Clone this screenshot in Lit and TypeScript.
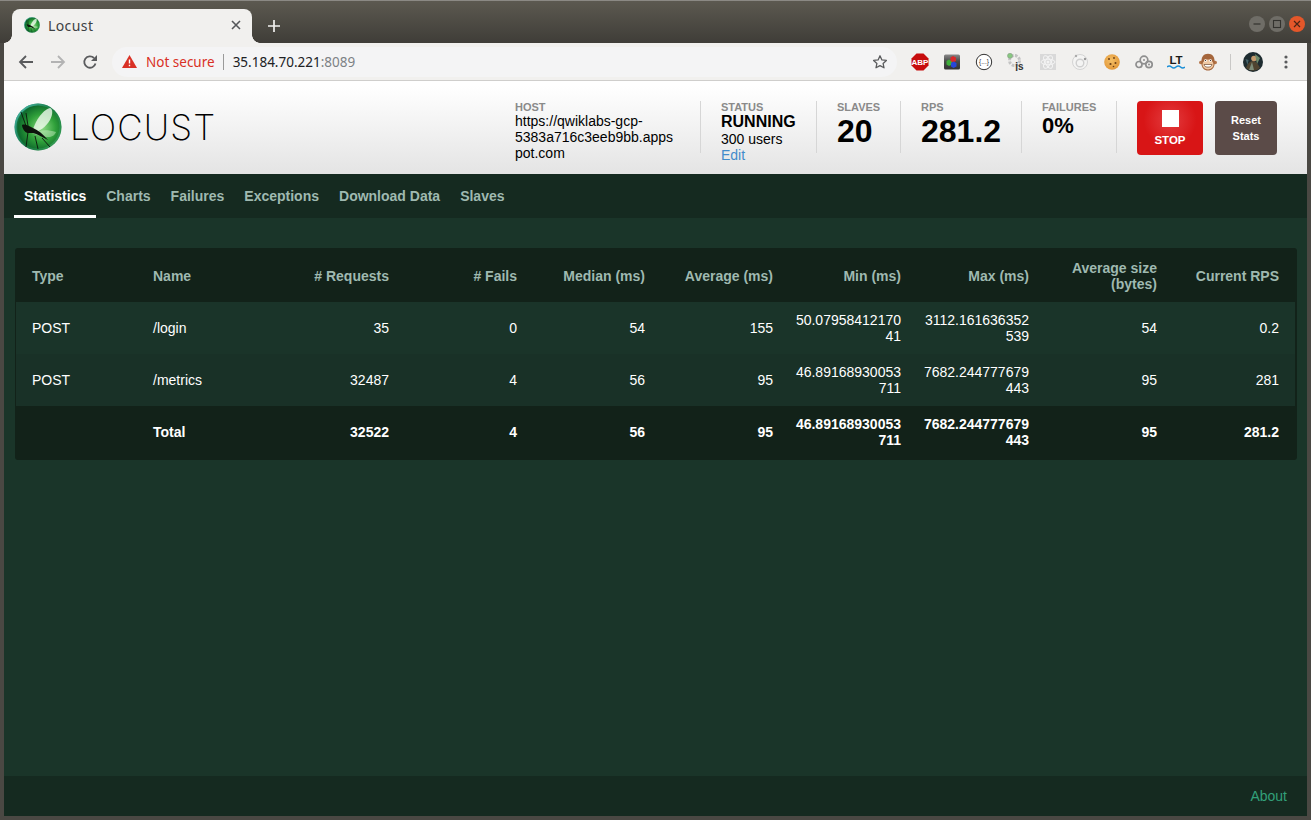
import { LitElement, html, css, svg } from "lit";
import { customElement } from "lit/decorators.js";

const tabs = ["Statistics", "Charts", "Failures", "Exceptions", "Download Data", "Slaves"];
const headers = ["Type", "Name", "# Requests", "# Fails", "Median (ms)", "Average (ms)", "Min (ms)", "Max (ms)", "Average size (bytes)", "Current RPS"];
const rows = [
  ["POST", "/login", "35", "0", "54", "155", "50.0795841217041", "3112.161636352539", "54", "0.2"],
  ["POST", "/metrics", "32487", "4", "56", "95", "46.89168930053711", "7682.244777679443", "95", "281"],
];
const total = ["", "Total", "32522", "4", "56", "95", "46.89168930053711", "7682.244777679443", "95", "281.2"];

const abp = svg`<svg class="ext" viewBox="0 0 18 18"><polygon points="5.500,.5 12.500,.5 17.500,5.500 17.500,12.500 12.500,17.500 5.500,17.500 .5,12.500 .5,5.500" fill="#c70d0d"/><text x="9" y="12" text-anchor="middle" class="abp">ABP</text></svg>`;
const cube = svg`<svg class="ext" viewBox="0 0 18 18"><defs><linearGradient id="cb" x1="0" y1="0" x2="0" y2="1"><stop offset="0" stop-color="#8a8a8a"/><stop offset=".45" stop-color="#4a4a4a"/><stop offset="1" stop-color="#333"/></linearGradient></defs><rect x="1" y="1.500" width="16" height="15" rx="1.500" fill="url(#cb)"/><polygon points="6,6.500 9,8 9,11.500 6,13 3.500,11.500 3.500,8" fill="#3fae3a"/><polygon points="10,3 13,4.500 13,8 10,9.500 7.500,8 7.500,4.500" fill="#d92a2a"/><polygon points="10.500,8.500 13.500,10 13.500,13.500 10.500,15 8,13.500 8,10" fill="#2747d8"/></svg>`;
const braces = svg`<svg class="ext" viewBox="0 0 18 18"><circle cx="9" cy="9" r="7.700" fill="#fff" stroke="#333" stroke-width="1"/><text x="9" y="11.300" text-anchor="middle" class="brace">{...}</text></svg>`;
const jsGear = svg`<svg class="ext" viewBox="0 0 18 18"><circle cx="7.500" cy="7.500" r="5" fill="none" stroke="#c4c4c4" stroke-width="3" stroke-dasharray="2.600 1.300"/><circle cx="3" cy="2.800" r="2.500" fill="#86c97f" stroke="#8a9a88" stroke-width=".6"/><text x="12.500" y="16.500" text-anchor="middle" class="js">js</text></svg>`;
const atom = svg`<svg class="ext" viewBox="0 0 18 18"><rect x="1" y="1" width="16" height="16" fill="#d9d9d9"/><g fill="none" stroke="#f4f4f4" stroke-width="1"><ellipse cx="9" cy="9" rx="7" ry="2.800"/><ellipse cx="9" cy="9" rx="7" ry="2.800" transform="rotate(60 9 9)"/><ellipse cx="9" cy="9" rx="7" ry="2.800" transform="rotate(120 9 9)"/></g><circle cx="9" cy="9" r="1.500" fill="#f4f4f4"/></svg>`;
const ring = svg`<svg class="ext" viewBox="0 0 18 18"><circle cx="9" cy="9" r="7.500" fill="#f4f4f3" stroke="#d4d4d4"/><circle cx="9" cy="10" r="3.800" fill="none" stroke="#cfcfcf" stroke-width="1.400"/><circle cx="5" cy="3" r="1.200" fill="#aaa"/><circle cx="14" cy="6" r="1.200" fill="#999"/></svg>`;
const cookie = svg`<svg class="ext" viewBox="0 0 18 18"><defs><radialGradient id="ck" cx="45%" cy="40%" r="60%"><stop offset="0" stop-color="#f4bf66"/><stop offset="1" stop-color="#e2983a"/></radialGradient></defs><circle cx="9" cy="9" r="7.800" fill="url(#ck)"/><g fill="#6b3f17"><circle cx="6" cy="6" r="1"/><circle cx="11" cy="5" r=".9"/><circle cx="12.500" cy="10" r="1"/><circle cx="7.500" cy="11" r="1.100"/><circle cx="10.500" cy="13.500" r=".8"/></g></svg>`;
const chain = svg`<svg class="ext" viewBox="0 0 18 18"><g fill="none" stroke="#8f8f8f" stroke-width="1.700"><circle cx="4" cy="11.500" r="3"/><circle cx="9" cy="7" r="3.800"/><circle cx="14" cy="11.500" r="3.200"/></g><circle cx="9" cy="7" r="1" fill="#8f8f8f"/><circle cx="14" cy="11.500" r="1" fill="#8f8f8f"/></svg>`;
const lt = svg`<svg class="ext" viewBox="0 0 18 18"><text x="9" y="10.500" text-anchor="middle" class="lt">LT</text><path d="M0 14q2.250-2 4.500 0t4.500 0 4.500 0 4.500 0" fill="none" stroke="#1c8fd6" stroke-width="1.500"/></svg>`;
const monkey = svg`<svg class="ext" viewBox="0 0 18 18"><circle cx="1.800" cy="9.500" r="1.800" fill="#b5764a"/><circle cx="16.200" cy="9.500" r="1.800" fill="#b5764a"/><path d="M9 .8C4.500.8 2.300 4 2.300 9.500s3 8 6.700 8 6.700-2.500 6.700-8S13.500.8 9 .8z" fill="#a5663c"/><ellipse cx="9" cy="11.500" rx="5.500" ry="5" fill="#efc9a4"/><circle cx="6.500" cy="7.500" r="1.300" fill="#fff"/><circle cx="11.500" cy="7.500" r="1.300" fill="#fff"/><circle cx="6.500" cy="7.500" r=".6" fill="#222"/><circle cx="11.500" cy="7.500" r=".6" fill="#222"/><path d="M5 11.500h8c-.5 3.500-7.500 3.500-8 0z" fill="#fff" stroke="#5a3418" stroke-width=".6"/></svg>`;

@customElement("app-root")
export class AppRoot extends LitElement {
  static styles = css`
    :host { display: block; }
    * { box-sizing: border-box; }
    .window {
      width: 1311px; height: 820px; display: flex; flex-direction: column; overflow: hidden;
      background: #4a4843; padding: 0 4px 4px;
      font-family: "Liberation Sans", Arial, sans-serif;
    }
    .titlebar {
      height: 43px; margin: 0 -4px; flex: none; display: flex; align-items: flex-end; padding-left: 12px;
      background: linear-gradient(#5c5950, #3f3d38); border-top: 1px solid #8b8984;
    }
    .tab {
      position: relative;
      width: 240px; height: 34px; background: #f1f0ee; border-radius: 8px 8px 0 0; display: flex; align-items: center;
      padding: 0 11px 2px 12px; gap: 8px; color: #3c4043; font: 14px "Noto Sans", sans-serif;
    }
    .tab::before, .tab::after { content: ""; position: absolute; bottom: 0; width: 8px; height: 8px; }
    .tab::before { left: -8px; background: radial-gradient(circle at 0 0, transparent 7.500px, #f1f0ee 8px); }
    .tab::after { right: -8px; background: radial-gradient(circle at 100% 0, transparent 7.500px, #f1f0ee 8px); }
    .tab .title { flex: 1; letter-spacing: .4px; }
    .tab-close, .newtab { display: block; }
    .newtab { margin: 0 0 11px 16px; }
    .win-btns { margin: 0 6px 0 auto; display: flex; gap: 4px; align-self: center; padding-top: 3px; }
    .win-btn { width: 16px; height: 16px; display: block; }
    .toolbar {
      height: 38px; flex: none; background: #f1f0ee; border-bottom: 1px solid #cfcecc; display: flex; align-items: center;
      font: 14px "Noto Sans", sans-serif; margin-right: 0;
    }
    .nav { display: block; flex: none; }
    .back { margin-left: 14px; }
    .fwd { margin-left: 16px; }
    .reload { margin-left: 16px; }
    .omni {
      width: 785px; height: 30px; margin-left: 14px; border-radius: 15px; background: #f4f4f5; display: flex; align-items: center;
      padding: 0 9px 0 10px; flex: none;
    }
    .warn { display: block; flex: none; }
    .insecure { color: #d93025; margin-left: 9px; font-size: 13.500px; }
    .sep { width: 1px; height: 16px; background: #9a9a9a; margin: 0 9px 0 8px; flex: none; }
    .host-url { color: #202124; font-size: 13.500px; }
    .port { color: #7d8285; }
    .star { margin-left: auto; display: block; }
    .exts { display: flex; margin-left: 14px; align-items: center; gap: 14px; }
    .ext { width: 18px; height: 18px; display: block; flex: none; }
    .abp { font: bold 8px "Liberation Sans", sans-serif; fill: #fff; }
    .brace { font: 6.500px "Liberation Sans", sans-serif; fill: #333; }
    .js { font: bold 10px "Liberation Sans", sans-serif; fill: #333; }
    .lt { font: bold 11.500px "Liberation Sans", sans-serif; fill: #1b1b1b; }
    .tool-sep { width: 1px; height: 16px; background: #c9c8c6; margin: 0 -2px 0 -1px; flex: none; }
    .avatar { width: 20px; height: 20px; display: block; flex: none; }
    .menu { display: block; margin-left: 7px; flex: none; }
    .page { flex: 1; display: flex; flex-direction: column; background: #1a3529; min-height: 0; }
    .header {
      height: 93px; flex: none; display: flex; align-items: flex-start; padding: 20px 30px 0 10px;
      background: linear-gradient(#fff 5%, #e4e4e4);
    }
    .logo { display: flex; align-items: center; gap: 8px; width: 501px; margin-top: 2px; flex: none; }
    .globe { width: 48px; height: 48px; display: block; flex: none; }
    .wordmark { font: 200 35px Inter, Lato, sans-serif; color: #000; letter-spacing: 1.1px; line-height: 48px; }
    .stat { height: 52px; border-right: 1px solid #d6d6d6; padding-left: 20px; flex: none; }
    .stat.host { padding-left: 0; width: 186px; }
    .stat.status { width: 116px; }
    .stat.slaves { width: 84px; }
    .stat.rps { width: 121px; }
    .stat.fails { width: 95px; }
    .label { font-size: 11px; font-weight: bold; color: #8a8a8a; line-height: 12px; display: block; }
    .hosturl { width: 160px; font-size: 14px; line-height: 16px; color: #000; overflow-wrap: anywhere; }
    .running { font-size: 16px; font-weight: bold; line-height: 16px; color: #000; display: block; margin-top: 1px; }
    .users { font-size: 14px; line-height: 16px; color: #000; display: block; margin-top: 1px; }
    .edit { font-size: 14px; line-height: 16px; color: #428bca; display: block; }
    .big { font-size: 32px; font-weight: bold; line-height: 32px; color: #000; display: block; margin-top: 2px; }
    .mid { font-size: 22px; font-weight: bold; line-height: 24px; color: #000; display: block; margin-top: 1px; }
    .btn {
      height: 54px; border-radius: 4px; flex: none; color: #fff; font-weight: bold; font-size: 11px; text-align: center;
      display: flex; flex-direction: column; align-items: center; justify-content: center;
    }
    .stop { width: 66px; margin-left: 20px; background: radial-gradient(circle at 50% 35%, #e33c3f 0, #d81516 55%); }
    .square { width: 17px; height: 17px; background: #fff; display: block; margin-bottom: 7px; }
    .stop .t { line-height: 13px; font-size: 11.500px; }
    .reset { width: 62px; margin-left: 12px; background: #5b4b48; line-height: 16px; }
    .tabs { height: 44px; flex: none; background: #152a20; display: flex; padding-left: 10px; }
    .tabitem {
      padding: 14px 10px 0; font-size: 14px; font-weight: bold; color: #9fb9b0; line-height: 16px; border-bottom: 3px solid transparent;
    }
    .tabitem.active { color: #fff; border-bottom-color: #fff; }
    .main { flex: 1; padding: 30px 10px 0 11px; min-height: 0; }
    .table { background: #122219; border-radius: 3px; padding: 0 2px 0 1px; font-size: 14px; color: #fff; }
    .row {
      display: grid; grid-template-columns: 121px 140px 128px 128px 128px 128px 128px 128px 128px 122px; align-items: center; height: 52px;
      line-height: 16px;
    }
    .row.head { height: 54px; font-weight: bold; color: #9fb9b0; padding-top: 2px; }
    .row.tot { height: 54px; font-weight: bold; padding-bottom: 2px; }
    .row.odd { background: #1a3429; }
    .row.even { background: #193127; }
    .cell { padding: 0 16px 0 6px; text-align: right; overflow-wrap: anywhere; }
    .cell.left { text-align: left; padding: 0 16px; }
    .footer {
      height: 40px; flex: none; background: #152a20; color: #32a07a; font-size: 14px; text-align: right; padding: 12px 20px 0 0; line-height: 16px;
    }
  `;

  private cells(r: string[]) {
    return r.map((c, i) => html`<div class="cell ${i < 2 ? "left" : ""}">${c}</div>`);
  }

  render() {
    return html`<div class="window">
      <div class="titlebar">
        <div class="tab">
          <svg class="ext" style="width:16px;height:16px" viewBox="0 0 48 48"><use href="#globe-art"></use></svg>
          <span class="title">Locust</span>
          <svg class="tab-close" width="10" height="10" viewBox="0 0 10 10"><path d="M1 1l8 8M9 1l-8 8" stroke="#55575a" stroke-width="1.600"/></svg>
        </div>
        <svg class="newtab" width="12" height="12" viewBox="0 0 12 12"><path d="M6 0v12M0 6h12" stroke="#f2f1ef" stroke-width="1.700"/></svg>
        <div class="win-btns">
          <svg class="win-btn" viewBox="0 0 16 16"><circle cx="8" cy="8" r="8" fill="#6f6d67"/><path d="M4.500 8h7" stroke="#33322e" stroke-width="1.200"/></svg>
          <svg class="win-btn" viewBox="0 0 16 16"><circle cx="8" cy="8" r="8" fill="#6f6d67"/><rect x="4.500" y="4.500" width="7" height="7" fill="none" stroke="#33322e" stroke-width="1.100"/></svg>
          <svg class="win-btn" viewBox="0 0 16 16"><circle cx="8" cy="8" r="8" fill="#e4572a"/><path d="M5 5l6 6M11 5l-6 6" stroke="#4a2515" stroke-width="1.200"/></svg>
        </div>
      </div>
      <div class="toolbar">
        <svg class="nav back" width="16" height="16" viewBox="0 0 16 16"><path d="M15 8H2M8 2L2 8l6 6" fill="none" stroke="#5a5b5d" stroke-width="1.800"/></svg>
        <svg class="nav fwd" width="16" height="16" viewBox="0 0 16 16"><path d="M1 8h13M8 2l6 6-6 6" fill="none" stroke="#b3b3b3" stroke-width="1.800"/></svg>
        <svg class="nav reload" width="16" height="16" viewBox="0 0 16 16"><path d="M13.500 9.500A5.700 5.700 0 1 1 12 4" fill="none" stroke="#5a5b5d" stroke-width="1.800"/><path d="M15 1v6H9z" fill="#5a5b5d"/></svg>
        <div class="omni">
          <svg class="warn" width="15" height="13" viewBox="0 0 15 13"><path d="M7.500 0L15 13H0z" fill="#d93025"/><path d="M7.500 4.500v4M7.500 9.700v1.500" stroke="#fff" stroke-width="1.400"/></svg>
          <span class="insecure">Not secure</span>
          <span class="sep"></span>
          <span class="host-url">35.184.70.221<span class="port">:8089</span></span>
          <svg class="star" width="16" height="16" viewBox="0 0 16 16"><path d="M8 1.800l1.900 4.100 4.500.5-3.300 3 .9 4.400L8 11.600l-4 2.200.9-4.400-3.300-3 4.500-.5z" fill="none" stroke="#5a5b5d" stroke-width="1.300" stroke-linejoin="round"/></svg>
        </div>
        <div class="exts">
          ${abp}${cube}${braces}${jsGear}${atom}${ring}${cookie}${chain}${lt}${monkey}
          <span class="tool-sep"></span>
          <svg class="avatar" viewBox="0 0 20 20"><circle cx="10" cy="10" r="10" fill="#1e2c30"/><path d="M3 16c2-5 4-7 7-7s5 3 7 7a10 10 0 0 1-14 0z" fill="#4f4430"/><path d="M6 18l3-8 2 8z" fill="#7d8c78"/><circle cx="11" cy="6.500" r="2.800" fill="#c49a6c"/><path d="M12 2l5 4-3 6z" fill="#6e8a6a"/><path d="M2.500 7l3 1-1 5z" fill="#46646a"/></svg>
          <svg class="menu" width="4" height="14" viewBox="0 0 4 14"><g fill="#5a5b5d"><circle cx="2" cy="2" r="1.600"/><circle cx="2" cy="7" r="1.600"/><circle cx="2" cy="12" r="1.600"/></g></svg>
        </div>
      </div>
      <div class="page">
        <div class="header">
          <div class="logo">
            <svg class="globe" viewBox="0 0 48 48">
              <defs>
                <radialGradient id="gl" cx="58%" cy="52%" r="58%"><stop offset="0" stop-color="#8fdc86"/><stop offset=".5" stop-color="#2fa03a"/><stop offset=".85" stop-color="#0f6b2c"/><stop offset="1" stop-color="#17805a"/></radialGradient>
                <linearGradient id="rim" x1="0" y1="0" x2="1" y2="1"><stop offset="0" stop-color="#5cc7bd"/><stop offset=".5" stop-color="#2a9a80" stop-opacity=".2"/><stop offset="1" stop-color="#5fc77e" stop-opacity=".5"/></linearGradient>
                <g id="globe-art">
                  <circle cx="24" cy="24" r="23.500" fill="url(#gl)"/>
                  <circle cx="24" cy="24" r="22.500" fill="none" stroke="url(#rim)" stroke-width="2"/>
                  <path d="M18 30C20 20 28 7 36 5c3 1 3 6 0 12-4 7-11 12-18 13z" fill="#f0faee" opacity=".8"/>
                  <path d="M18 30c7-3 15-4 24-1-1 3-4 5-8 5-6 0-11-2-16-4z" fill="#d4f2cf" opacity=".45"/>
                  <path d="M7 9l5 14M12 10l2 13M14 29L12 44M21 33l3 13M28 35l8 9" stroke="#0c140c" stroke-width=".9" fill="none"/>
                  <path d="M8 22c2-1 5 0 7 1l4 2c5 2 10 6 15 12-6-3-11-6-15-7l-5 0c-3 0-6-5-6-8z" fill="#0c140c"/>
                </g>
              </defs>
              <use href="#globe-art"></use>
            </svg>
            <span class="wordmark">LOCUST</span>
          </div>
          <div class="stat host"><span class="label">HOST</span><div class="hosturl">https://qwiklabs-gcp-5383a716c3eeb9bb.appspot.com</div></div>
          <div class="stat status"><span class="label">STATUS</span><span class="running">RUNNING</span><span class="users">300 users</span><span class="edit">Edit</span></div>
          <div class="stat slaves"><span class="label">SLAVES</span><span class="big">20</span></div>
          <div class="stat rps"><span class="label">RPS</span><span class="big">281.2</span></div>
          <div class="stat fails"><span class="label">FAILURES</span><span class="mid">0%</span></div>
          <div class="btn stop"><span class="square"></span><span class="t">STOP</span></div>
          <div class="btn reset">Reset<br />Stats</div>
        </div>
        <div class="tabs">${tabs.map((t, i) => html`<div class="tabitem ${i === 0 ? "active" : ""}">${t}</div>`)}</div>
        <div class="main">
          <div class="table">
            <div class="row head">${this.cells(headers)}</div>
            ${rows.map((r, i) => html`<div class="row ${i === 0 ? "odd" : "even"}">${this.cells(r)}</div>`)}
            <div class="row tot">${this.cells(total)}</div>
          </div>
        </div>
        <div class="footer">About</div>
      </div>
    </div>`;
  }
}
